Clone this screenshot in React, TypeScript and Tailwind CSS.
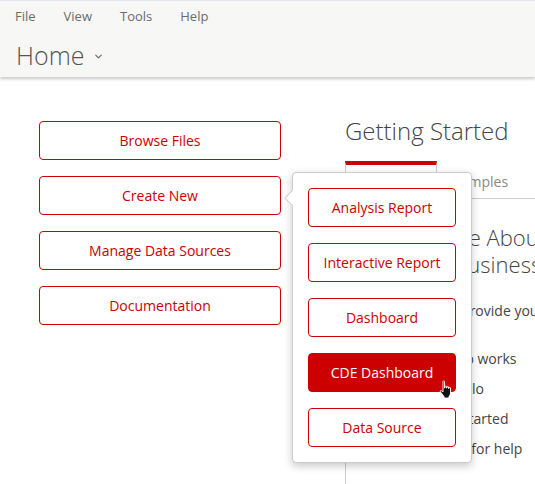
import { ChevronDown } from 'lucide-react';

const leftActions = ['Browse Files', 'Create New', 'Manage Data Sources', 'Documentation'];
const createItems = ['Analysis Report', 'Interactive Report', 'Dashboard', 'CDE Dashboard', 'Data Source'];

// the start of each line sits under the flyout, the offsets line up the visible tail
const helpLinks = [
  { text: 'How Pentaho works', offset: 'ml-[24px]' },
  { text: 'Try Pentaho Hello', offset: 'ml-[6px]' },
  { text: 'Read Getting started', offset: 'ml-[12px]' },
  { text: 'Where to go for help', offset: 'ml-[26px]' },
];

function HandCursor() {
  return (
    <svg width="14" height="19" viewBox="0 0 14 19" className="absolute left-[439px] top-[380px]">
      <path
        d="M4 1.5c0-.8 1.5-.8 1.5 0V8h.5V6.5c0-.8 1.5-.8 1.5 0V8h.5V7c0-.8 1.5-.8 1.5 0v1.5h.5V8c0-.8 1.5-.8 1.5 0v5c0 1.5-.8 2.8-1.5 3.5V18H5v-1.5L1.5 12c-.8-.9.3-2 1.2-1.2L4 12z"
        fill="#111"
        stroke="#fff"
        strokeWidth="0.9"
      />
    </svg>
  );
}

export default function App() {
  return (
    <div className="relative h-[484px] w-[535px] overflow-hidden bg-white font-['Open_Sans',sans-serif]">
      <header className="relative z-10 h-[77px] border-t border-[#e1e5ec] bg-[#f7f7f5] shadow-[0_2px_3px_rgba(0,0,0,0.22)]">
        <nav className="flex h-[32px] items-center pl-[15px] text-[13px] text-[#6b6b6b]">
          <span className="mr-[28px]">File</span>
          <span className="mr-[28px]">View</span>
          <span className="mr-[28px]">Tools</span>
          <span>Help</span>
        </nav>
        <div className="flex items-center pl-[16px] pt-[5px]">
          <span className="text-[25px] font-light leading-[34px] text-[#555]">Home</span>
          <ChevronDown className="ml-[9px] mt-[3px] h-[11px] w-[11px] text-[#666]" strokeWidth={2.4} />
        </div>
      </header>

      <main className="flex">
        <div className="ml-[39px] mt-[44px] flex w-[242px] shrink-0 flex-col gap-[16px]">
          {leftActions.map((label) => (
            <div
              key={label}
              className="flex h-[39px] items-center justify-center rounded-[4px] border border-[#cc0000] text-[14px] text-[#cc0000]"
            >
              {label}
            </div>
          ))}
        </div>

        <section className="ml-[64px] w-[320px] shrink-0">
          <h1 className="mt-[38px] h-[32px] text-[24px] font-light leading-[32px] text-[#444] whitespace-nowrap">
            Getting Started
          </h1>
          <div className="mt-[14px] flex h-[38px] border-b border-[#cccccc]">
            <div className="-mb-px flex w-[92px] items-center justify-center border-x border-t-4 border-x-[#cccccc] border-t-[#cc0000] bg-white text-[14px] text-[#444]">
              Welcome
            </div>
            <div className="flex items-center pl-[16px] pt-[3px] text-[14px] text-[#888]">Samples</div>
          </div>
          <div className="h-[300px] border-l border-[#cccccc] pl-[16px] pt-[25px] whitespace-nowrap">
            <p className="ml-[4px] text-[22px] font-light leading-[27px] text-[#444]">Learn More About</p>
            <p className="ml-[3px] text-[22px] font-light leading-[27px] text-[#444]">Pentaho Business</p>
            <p className="ml-[0px] mt-[23px] text-[14px] leading-[20px] text-[#444]">Learn what we provide you</p>
            <ul className="mt-[23px] text-[14px] leading-[30px] text-[#444]">
              {helpLinks.map((link) => (
                <li key={link.text} className={link.offset}>
                  {link.text}
                </li>
              ))}
            </ul>
          </div>
        </section>
      </main>

      {/* create new flyout */}
      <div className="absolute left-[292px] top-[172px] w-[180px] rounded-[4px] border border-[#cccccc] bg-white px-[15px] pb-[15px] pt-[15px] shadow-[0_3px_8px_rgba(0,0,0,0.22)]">
        <div className="absolute -left-[10px] top-[15px] h-[20px] w-[10px] overflow-hidden">
          <div className="absolute left-[4px] top-[3px] h-[14px] w-[14px] rotate-45 border border-[#cccccc] bg-white" />
        </div>
        <div className="flex flex-col gap-[16px]">
          {createItems.map((item) => (
            <div
              key={item}
              className={
                item === 'CDE Dashboard'
                  ? 'flex h-[39px] items-center justify-center rounded-[4px] border border-[#cc0000] bg-[#cc0000] text-[14px] text-white'
                  : 'flex h-[39px] items-center justify-center rounded-[4px] border border-[#cc0000] bg-white text-[14px] text-[#cc0000]'
              }
            >
              {item}
            </div>
          ))}
        </div>
      </div>

      <HandCursor />
    </div>
  );
}
